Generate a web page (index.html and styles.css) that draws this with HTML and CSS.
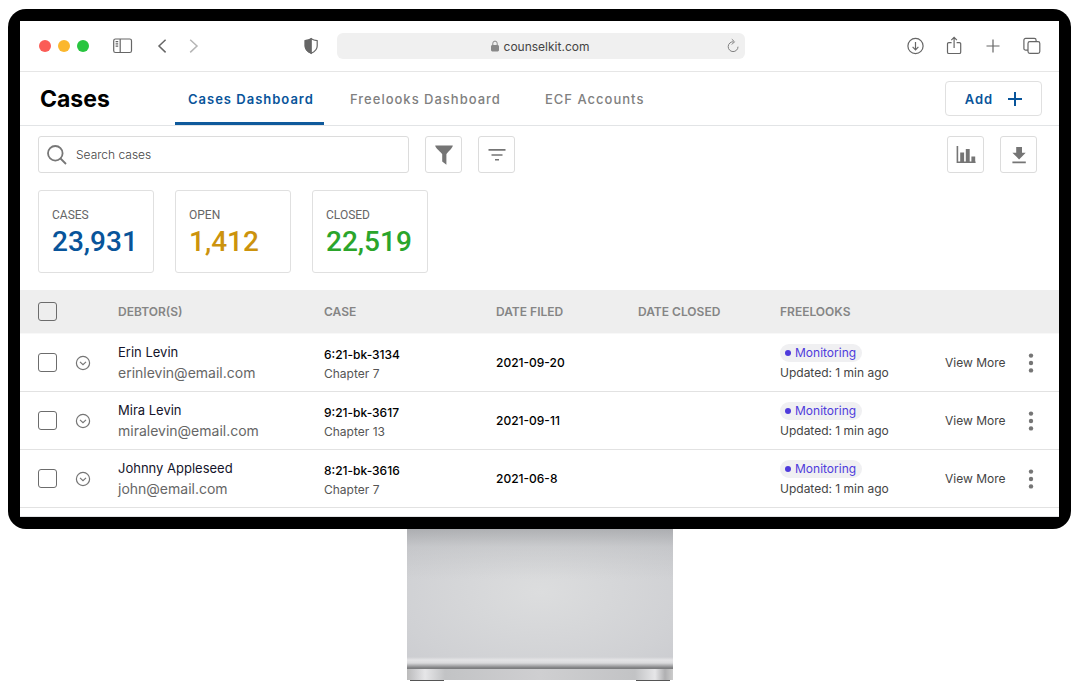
FILE: index.html
```html
<!DOCTYPE html>
<html lang="en">
  <head>
    <meta charset="UTF-8" />
    <meta name="viewport" content="width=device-width, initial-scale=1.0" />
    <title>Cases - CounselKit</title>
    <link rel="stylesheet" href="styles.css">
  </head>
  <body>
    <div class="monitor">
      <div class="screen">

        <!-- Browser bar -->
        <div class="browser">
          <div class="browser-left">
            <div class="lights">
              <span class="light red"></span>
              <span class="light yellow"></span>
              <span class="light green"></span>
            </div>
            <button type="button" class="tool" aria-label="Sidebar">
              <svg width="20" height="20" viewBox="0 0 20 20"><rect x="0.7" y="3" width="17.8" height="13.5" rx="1.8"/><path d="M7.2 3v13.5M2.6 5.6h2.6M2.6 7.9h2.6M2.6 10.2h2.6"/></svg>
            </button>
            <div class="history">
              <button type="button" class="tool" aria-label="Back">
                <svg width="20" height="20" viewBox="0 0 20 20"><path class="thick" d="M13.6 3.8 7 10l6.6 6.4"/></svg>
              </button>
              <button type="button" class="tool muted" aria-label="Forward">
                <svg width="20" height="20" viewBox="0 0 20 20"><path class="thick" d="M7.2 3.8 14 10l-6.8 6.4"/></svg>
              </button>
            </div>
            <button type="button" class="tool shield" aria-label="Privacy report">
              <svg width="20" height="20" viewBox="0 0 20 20"><path d="M10.2 2.8c1.8 1.2 3.6 1.7 6 1.9v5.2c0 3.4-2.2 5.6-6 7.3-3.8-1.7-6-3.9-6-7.3V4.7c2.4-.2 4.2-.7 6-1.9z"/><path class="fill" d="M10.2 2.8v14.4c-3.8-1.7-6-3.9-6-7.3V4.7c2.4-.2 4.2-.7 6-1.9z"/></svg>
            </button>
          </div>
          <div class="address">
            <svg class="lock" width="10" height="12" viewBox="0 0 10 12"><rect x="1.5" y="5.5" width="7" height="5.5" rx="0.6"/><path d="M2.8 5.5V3.3a2.2 2.2 0 0 1 4.4 0V5.5"/></svg>
            <span>counselkit.com</span>
            <button type="button" class="reload" aria-label="Reload">
              <svg width="14" height="16" viewBox="0 0 14 16"><path d="M7.5 3.8A4.9 4.9 0 1 0 12 8.7M5.8 1.2l2.7 2.6-2.7 2.7"/></svg>
            </button>
          </div>
          <div class="browser-right">
            <button type="button" class="tool" aria-label="Downloads">
              <svg width="20" height="20" viewBox="0 0 20 20"><circle cx="10.5" cy="10" r="7.6"/><path d="M10.5 6v7.6M7.6 10.9l2.9 2.9 2.9-2.9"/></svg>
            </button>
            <button type="button" class="tool" aria-label="Share">
              <svg width="20" height="20" viewBox="0 0 20 20"><path d="M7.6 6.6H4.8a1.3 1.3 0 0 0-1.3 1.3v8.3a1.3 1.3 0 0 0 1.3 1.3h10.6a1.3 1.3 0 0 0 1.3-1.3V7.9a1.3 1.3 0 0 0-1.3-1.3h-2.8M10.1 12V1.4M7.3 4.1l2.8-2.8 2.8 2.8"/></svg>
            </button>
            <button type="button" class="tool" aria-label="New tab">
              <svg width="20" height="20" viewBox="0 0 20 20"><path d="M10 3.5v13M3.5 10h13"/></svg>
            </button>
            <button type="button" class="tool" aria-label="Tab overview">
              <svg width="20" height="20" viewBox="0 0 20 20"><rect x="6" y="5.6" width="11.8" height="11.8" rx="1.8"/><path d="M6 14.2H3.7a1.8 1.8 0 0 1-1.8-1.8V4.2a1.8 1.8 0 0 1 1.8-1.8h8.6a1.8 1.8 0 0 1 1.8 1.8v1.4"/></svg>
            </button>
          </div>
        </div>

        <!-- App header -->
        <header class="header">
          <h1>Cases</h1>
          <nav class="tabs">
            <a href="#" class="tab active">Cases Dashboard</a>
            <a href="#" class="tab">Freelooks Dashboard</a>
            <a href="#" class="tab">ECF Accounts</a>
          </nav>
          <button type="button" class="add">
            Add
            <svg width="14" height="14" viewBox="0 0 14 14"><path d="M7 0v14M0 7h14"/></svg>
          </button>
        </header>

        <main>
          <div class="toolbar">
            <form class="search">
              <svg width="20" height="20" viewBox="0 0 20 20"><circle cx="8.3" cy="8.3" r="7.3"/><path d="m13.5 13.5 5.5 5.5"/></svg>
              <input type="text" placeholder="Search cases" aria-label="Search cases" />
            </form>
            <button type="button" class="icon-btn" aria-label="Filter">
              <svg width="20" height="20" viewBox="0 0 20 20"><path d="M1.2 0.5h17.6c0 2.5-5 6.3-6.4 8.7v10.6l-4.2-3.2V9.2C6.8 6.8 1.5 3.5 1.2 0.5z"/></svg>
            </button>
            <button type="button" class="icon-btn" aria-label="Sort">
              <svg width="20" height="20" viewBox="0 0 20 20"><path d="M1.5 4h17v1.8h-17zM4.5 9.2h11v1.6h-11zM8 14h4v1.6H8z"/></svg>
            </button>
            <button type="button" class="icon-btn push" aria-label="Reports">
              <svg width="20" height="20" viewBox="0 0 20 20"><path d="M0.6 1h1.6v15.4h17.4V18H0.6zM4.2 7.6h3.9v8.8H4.2zM9.8 4h3.9v12.4H9.8zM15.4 11.6h3.8v4.8h-3.8z"/></svg>
            </button>
            <button type="button" class="icon-btn" aria-label="Download">
              <svg width="20" height="20" viewBox="0 0 20 20"><path d="M7.2 2h5.8v5.8h3.7L10.1 14.4 3.4 7.8h3.8zM3.4 16.4h13.4v1.8H3.4z"/></svg>
            </button>
          </div>

          <section class="stats">
            <div class="stat">
              <h2>CASES</h2>
              <p class="blue">23,931</p>
            </div>
            <div class="stat">
              <h2>OPEN</h2>
              <p class="gold">1,412</p>
            </div>
            <div class="stat">
              <h2>CLOSED</h2>
              <p class="lime">22,519</p>
            </div>
          </section>

          <table>
            <colgroup>
              <col class="col-check">
              <col class="col-expand">
              <col class="col-debtor">
              <col class="col-case">
              <col class="col-date">
              <col class="col-date">
              <col class="col-free">
              <col class="col-view">
              <col class="col-menu">
            </colgroup>
            <thead>
              <tr>
                <th><input type="checkbox" aria-label="Select all" /></th>
                <th></th>
                <th>DEBTOR(S)</th>
                <th>CASE</th>
                <th>DATE FILED</th>
                <th>DATE CLOSED</th>
                <th>FREELOOKS</th>
                <th></th>
                <th></th>
              </tr>
            </thead>
            <tbody>
              <tr>
                <td><input type="checkbox" aria-label="Select Erin Levin" /></td>
                <td><button type="button" class="plain" aria-label="Expand"><svg class="expand" width="16" height="16" viewBox="0 0 16 16"><circle cx="8" cy="8" r="6.6"/><path d="m5 6.9 3 2.7 3-2.7"/></svg></button></td>
                <td><div class="name">Erin Levin</div><div class="email">erinlevin@email.com</div></td>
                <td class="case"><div class="number">6:21-bk-3134</div><div class="chapter">Chapter 7</div></td>
                <td class="date">2021-09-20</td>
                <td class="date"></td>
                <td class="freelook"><span class="badge">Monitoring</span><div class="updated">Updated: 1 min ago</div></td>
                <td><a href="#" class="view">View More</a></td>
                <td><button type="button" class="plain" aria-label="More"><svg class="dots" width="6" height="20" viewBox="0 0 6 20"><circle cx="3" cy="2.6" r="2.2"/><circle cx="3" cy="10" r="2.2"/><circle cx="3" cy="17.4" r="2.2"/></svg></button></td>
              </tr>
              <tr>
                <td><input type="checkbox" aria-label="Select Mira Levin" /></td>
                <td><button type="button" class="plain" aria-label="Expand"><svg class="expand" width="16" height="16" viewBox="0 0 16 16"><circle cx="8" cy="8" r="6.6"/><path d="m5 6.9 3 2.7 3-2.7"/></svg></button></td>
                <td><div class="name">Mira Levin</div><div class="email">miralevin@email.com</div></td>
                <td class="case"><div class="number">9:21-bk-3617</div><div class="chapter">Chapter 13</div></td>
                <td class="date">2021-09-11</td>
                <td class="date"></td>
                <td class="freelook"><span class="badge">Monitoring</span><div class="updated">Updated: 1 min ago</div></td>
                <td><a href="#" class="view">View More</a></td>
                <td><button type="button" class="plain" aria-label="More"><svg class="dots" width="6" height="20" viewBox="0 0 6 20"><circle cx="3" cy="2.6" r="2.2"/><circle cx="3" cy="10" r="2.2"/><circle cx="3" cy="17.4" r="2.2"/></svg></button></td>
              </tr>
              <tr>
                <td><input type="checkbox" aria-label="Select Johnny Appleseed" /></td>
                <td><button type="button" class="plain" aria-label="Expand"><svg class="expand" width="16" height="16" viewBox="0 0 16 16"><circle cx="8" cy="8" r="6.6"/><path d="m5 6.9 3 2.7 3-2.7"/></svg></button></td>
                <td><div class="name">Johnny Appleseed</div><div class="email">john@email.com</div></td>
                <td class="case"><div class="number">8:21-bk-3616</div><div class="chapter">Chapter 7</div></td>
                <td class="date">2021-06-8</td>
                <td class="date"></td>
                <td class="freelook"><span class="badge">Monitoring</span><div class="updated">Updated: 1 min ago</div></td>
                <td><a href="#" class="view">View More</a></td>
                <td><button type="button" class="plain" aria-label="More"><svg class="dots" width="6" height="20" viewBox="0 0 6 20"><circle cx="3" cy="2.6" r="2.2"/><circle cx="3" cy="10" r="2.2"/><circle cx="3" cy="17.4" r="2.2"/></svg></button></td>
              </tr>
            </tbody>
          </table>
        </main>
      </div>
    </div>

    <!-- Monitor stand -->
    <div class="stand">
      <div class="stand-neck"></div>
      <div class="stand-base"></div>
      <div class="stand-feet"><span></span><span></span></div>
    </div>
  </body>
</html>
```

FILE: styles.css
```css
* {
  box-sizing: border-box;
}

body {
  margin: 9px 9px 0 8px;
  background: #fff;
  font-family: Inter, "Liberation Sans", sans-serif;
  font-size: 12px;
  color: #111;
}

h1, h2, p {
  margin: 0;
}

button {
  font-family: inherit;
  padding: 0;
  border: none;
  background: none;
  cursor: pointer;
}

a {
  text-decoration: none;
}

svg {
  display: block;
}

.monitor {
  padding: 12px;
  background: #000;
  border-radius: 18px;
}

.screen {
  background: #fff;
  overflow: hidden;
}

/* Browser bar */
.browser {
  display: grid;
  grid-template-columns: 1fr 408px 1fr;
  align-items: center;
  height: 51px;
  padding: 0 17px 0 19px;
  border-bottom: 1px solid #e6e6e6;
}

.browser-left,
.browser-right,
.history,
.lights {
  display: flex;
  align-items: center;
}

.browser-right {
  justify-content: flex-end;
  gap: 19px;
}

.lights {
  gap: 7px;
  margin-right: 24px;
}

.light {
  width: 12px;
  height: 12px;
  border-radius: 50%;
}

.red {
  background: #fb5c56;
}

.yellow {
  background: #fbb72e;
}

.green {
  background: #28c53f;
}

.history {
  gap: 11px;
  margin-left: 19px;
}

.tool svg {
  fill: none;
  stroke: #666;
  stroke-width: 1.2;
}

.tool .thick {
  stroke-width: 1.5;
}

.tool .fill {
  fill: #666;
}

.tool.muted svg {
  stroke: #b5b5b5;
}

.shield {
  margin-left: auto;
  margin-right: 16px;
}

.address {
  position: relative;
  display: flex;
  align-items: center;
  justify-content: center;
  gap: 4px;
  height: 26px;
  padding-right: 2px;
  border-radius: 6px;
  background: #f0f0f0;
  color: #444;
}

.lock {
  fill: #888;
  stroke: #888;
}

.lock path {
  fill: none;
}

.reload {
  position: absolute;
  right: 5px;
  top: 5px;
}

.reload svg {
  fill: none;
  stroke: #808080;
}

/* App header */
.header {
  display: flex;
  align-items: center;
  height: 54px;
  padding: 0 17px 0 20px;
  border-bottom: 1px solid #e2e4e6;
}

h1 {
  width: 135px;
  font-size: 23px;
  font-weight: 700;
  line-height: 28px;
  color: #000;
}

.tabs {
  display: grid;
  grid-template-columns: 149px 182px auto;
  gap: 13px;
  align-self: stretch;
}

.tab {
  display: flex;
  align-items: center;
  padding: 4px 13px 0;
  border-bottom: 3px solid transparent;
  font-size: 13px;
  font-weight: 500;
  letter-spacing: 1px;
  white-space: nowrap;
  color: #808080;
}

.tab.active {
  border-color: #0f5a9c;
  font-weight: 600;
  color: #08549a;
}

.add {
  display: flex;
  align-items: center;
  justify-content: center;
  gap: 15px;
  width: 97px;
  height: 35px;
  margin-left: auto;
  border: 1px solid #e0e0e0;
  border-radius: 4px;
  font-size: 13px;
  font-weight: 600;
  letter-spacing: 1px;
  color: #08549a;
}

.add svg {
  fill: none;
  stroke: #08549a;
  stroke-width: 2;
}

/* Toolbar */
main {
  padding: 10px 0 8px;
  border-bottom: 1px solid #e2e4e6;
}

.toolbar {
  display: flex;
  gap: 16px;
  padding: 0 22px 0 18px;
}

.search {
  display: flex;
  align-items: center;
  gap: 9px;
  flex: 0 1 371px;
  height: 37px;
  padding: 0 8px;
  border: 1px solid #dcdcdc;
  border-radius: 3px;
}

.search svg {
  fill: none;
  stroke: #777;
  stroke-width: 1.8;
}

.search input {
  flex: 1;
  min-width: 0;
  padding: 0;
  border: none;
  outline: none;
  font-family: inherit;
  font-size: 12px;
  color: #333;
}

.search input::placeholder {
  font-weight: 300;
  color: #444;
}

.icon-btn {
  display: flex;
  align-items: center;
  justify-content: center;
  width: 37px;
  height: 37px;
  border: 1px solid #dcdcdc;
  border-radius: 3px;
}

.icon-btn svg {
  fill: #757575;
}

.push {
  margin-left: auto;
}

/* Stat cards */
.stats {
  display: flex;
  gap: 21px;
  padding: 17px 18px;
}

.stat {
  width: 116px;
  height: 83px;
  padding: 17px 13px 0;
  border: 1px solid #e0e0e0;
  border-radius: 3px;
  font-family: Roboto, sans-serif;
}

.stat h2 {
  font-size: 12px;
  font-weight: 400;
  line-height: 14px;
  color: #666;
}

.stat p {
  font-size: 28px;
  font-weight: 500;
  line-height: 40px;
}

.blue {
  color: #08549a;
}

.gold {
  color: #cc930d;
}

.lime {
  color: #2ba52b;
}

/* Cases table */
table {
  width: 100%;
  table-layout: fixed;
  border-spacing: 0;
}

.col-check {
  width: 55px;
}

.col-expand {
  width: 43px;
}

.col-debtor {
  width: 206px;
}

.col-case {
  width: 172px;
}

.col-date {
  width: 142px;
}

.col-free {
  width: 165px;
}

.col-view {
  width: 83px;
}

.col-menu {
  width: 31px;
}

th {
  height: 44px;
  padding: 0;
  border-bottom: 1px solid #f8f8f8;
  background: #eee;
  font-size: 12px;
  font-weight: 600;
  text-align: left;
  color: #858585;
}

td {
  height: 58px;
  padding: 0;
  border-bottom: 1px solid #e2e2e2;
}

th:first-child,
td:first-child {
  padding-left: 18px;
}

input[type="checkbox"] {
  appearance: none;
  display: block;
  width: 19px;
  height: 19px;
  margin: 0;
  border: 1px solid #6c6c6c;
  border-radius: 3px;
}

.plain {
  display: block;
}

.expand {
  fill: none;
  stroke: #757575;
  stroke-width: 1.2;
}

.dots {
  fill: #757575;
}

.name {
  font-size: 13px;
  line-height: 20px;
  color: #14142b;
}

.email {
  font-size: 14px;
  line-height: 22px;
  color: #666;
}

.case,
.freelook {
  padding-top: 2px;
}

.number,
.date {
  font-weight: 500;
  color: #000;
}

.number,
.chapter {
  line-height: 19px;
}

.chapter {
  color: #555;
}

.badge {
  display: inline-flex;
  align-items: center;
  gap: 4px;
  height: 18px;
  padding: 0 6px 0 5px;
  border-radius: 9px;
  background: #f0f0f2;
  color: #4f3bdc;
}

.badge::before {
  content: "";
  width: 6px;
  height: 6px;
  border-radius: 50%;
  background: #4f3bdc;
}

.updated,
.view {
  line-height: 22px;
  color: #444;
}

/* Monitor stand */
.stand {
  width: 266px;
  margin: 0 auto;
}

.stand-neck {
  height: 140px;
  background:
    linear-gradient(to bottom, rgba(140, 142, 145, 0.5), rgba(160, 162, 165, 0.2) 18px, transparent 50px, transparent 128px, #e4e4e6 131px, #dadadc 134px, #7c7d7f 139px),
    radial-gradient(ellipse at 50% 45%, #dcddde, #d0d1d4 75%, #cbccd0);
}

.stand-base {
  height: 11px;
  background: linear-gradient(to right, #bbb, #c8c8ca 6px, #e6e6e8 18px, #c2c3c5 38px, #cfcfd1 50%, #c2c3c5 228px, #e6e6e8 248px, #b0b0b2 258px, #ccc);
}

.stand-feet {
  display: flex;
  justify-content: space-between;
  padding: 0 3px;
}

.stand-feet span {
  width: 34px;
  height: 1px;
  background: #555;
}
```
